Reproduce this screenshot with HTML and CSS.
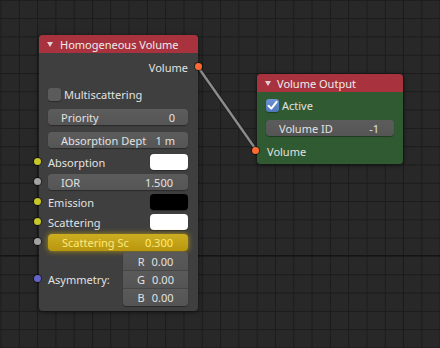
FILE: index.html
```html
<!DOCTYPE html>
<html lang="en">
<head>
	<meta charset="UTF-8">
	<title>Volume Nodes</title>
	<link rel="stylesheet" href="styles.css">
</head>
<body>
	<div class="editor">
		<svg class="link" width="440" height="348" viewBox="0 0 440 348">
			<line class="link--edge" x1="198" y1="67" x2="257" y2="151"/>
			<line class="link--line" x1="198" y1="67" x2="257" y2="151"/>
		</svg>

		<!-- Homogeneous Volume -->
		<div class="node node--volume">
			<div class="node--header">
				<span class="node--arrow"></span>
				<span class="node--title">Homogeneous Volume</span>
			</div>
			<div class="node--body">
				<div class="row row--output">
					<span>Volume</span>
					<span class="socket socket--out socket--shader"></span>
				</div>
				<div class="row row--check">
					<span class="check"></span>
					<span>Multiscattering</span>
				</div>
				<div class="field field--priority">
					<span>Priority</span>
					<span>0</span>
				</div>
				<div class="field field--dept">
					<span>Absorption Dept</span>
					<span>1 m</span>
				</div>
				<div class="row row--socket row--first">
					<span class="socket socket--in socket--color"></span>
					<span>Absorption</span>
					<span class="swatch swatch--white"></span>
				</div>
				<div class="row row--socket">
					<span class="socket socket--in socket--value"></span>
					<div class="field field--wide">
						<span>IOR</span>
						<span>1.500</span>
					</div>
				</div>
				<div class="row row--socket">
					<span class="socket socket--in socket--color"></span>
					<span>Emission</span>
					<span class="swatch swatch--black"></span>
				</div>
				<div class="row row--socket">
					<span class="socket socket--in socket--color"></span>
					<span>Scattering</span>
					<span class="swatch swatch--white"></span>
				</div>
				<div class="row row--socket">
					<span class="socket socket--in socket--value"></span>
					<div class="field field--wide field--active">
						<span>Scattering Sc</span>
						<span>0.300</span>
					</div>
				</div>
				<div class="row row--vector">
					<span class="socket socket--in socket--vector"></span>
					<span>Asymmetry:</span>
					<div class="vector">
						<div class="vector--item"><span>R</span><span>0.00</span></div>
						<div class="vector--item"><span>G</span><span>0.00</span></div>
						<div class="vector--item"><span>B</span><span>0.00</span></div>
					</div>
				</div>
			</div>
		</div>

		<!-- Volume Output -->
		<div class="node node--output">
			<div class="node--header">
				<span class="node--arrow"></span>
				<span class="node--title">Volume Output</span>
			</div>
			<div class="node--body">
				<div class="row row--check row--active">
					<span class="check check--on">
						<svg width="13" height="13" viewBox="0 0 13 13"><path d="M2.5 6.8 L5.3 9.6 L10.6 2.8" fill="none" stroke="#fff" stroke-width="2" stroke-linecap="round" stroke-linejoin="round"/></svg>
					</span>
					<span>Active</span>
				</div>
				<div class="field field--id">
					<span>Volume ID</span>
					<span>-1</span>
				</div>
				<div class="row row--input">
					<span class="socket socket--in socket--shader"></span>
					<span>Volume</span>
				</div>
			</div>
		</div>
	</div>
</body>
</html>
```

FILE: styles.css
```css
body {
	margin: 0;
	background: #282828;
	font-family: "Noto Sans", "Open Sans", sans-serif;
	font-size: 11px;
	color: #e2e2e2;
}

.editor {
	position: relative;
	width: 440px;
	height: 348px;
	overflow: hidden;
	background:
		linear-gradient(to bottom, transparent 255px, #141414 255px, #141414 256px, transparent 256px),
		linear-gradient(to right, #1b1b1b 1px, transparent 1px),
		linear-gradient(to bottom, #1b1b1b 1px, transparent 1px),
		#282828;
	background-size: 100% 100%, 18.3px 18.3px, 18.3px 18.3px;
	background-position: 0 0, 0.5px 0, 0 -0.2px;
}

.link {
	position: absolute;
	left: 0;
	top: 0;
}

.link--edge {
	stroke: #1e1e1e;
	stroke-width: 4;
}

.link--line {
	stroke: #8c8c8c;
	stroke-width: 2.4;
}

/* nodes */

.node {
	position: absolute;
	border-radius: 4px;
	background: #3f3f3f;
	box-shadow: 0 1px 5px rgba(0, 0, 0, 0.55);
}

.node--volume {
	left: 39px;
	top: 35px;
	width: 159px;
}

.node--output {
	left: 257px;
	top: 74px;
	width: 146px;
}

.node--header {
	display: flex;
	align-items: center;
	height: 18px;
	background: #a8323e;
	border-radius: 4px 4px 0 0;
	color: #ececec;
}

.node--arrow {
	width: 0;
	height: 0;
	margin: 1px 7px 0 8px;
	border-left: 3px solid transparent;
	border-right: 3px solid transparent;
	border-top: 5px solid #e2cfd1;
}

.node--output .node--arrow {
	margin-right: 6px;
}

.node--body {
	padding: 5px 10px 5px 9px;
}

.node--output .node--body {
	padding: 4px 9px;
	background: #305a31;
	border-radius: 0 0 4px 4px;
}

/* rows */

.row {
	position: relative;
	display: flex;
	align-items: center;
	justify-content: space-between;
}

.row--output {
	height: 18px;
	justify-content: flex-end;
}

.row--check {
	height: 18px;
	margin-top: 9px;
	justify-content: flex-start;
	gap: 3px;
}

.row--active {
	height: 19px;
	margin-top: 0;
}

.row--socket {
	height: 20px;
}

.row--first {
	margin-top: 4px;
}

.row--vector {
	height: 54px;
}

.row--input {
	height: 18px;
	margin-top: 6px;
	padding-left: 1px;
}

/* widgets */

.check {
	display: flex;
	width: 13px;
	height: 13px;
	border-radius: 3px;
	background: #5b5b5b;
	box-shadow: 0 1px 1px rgba(0, 0, 0, 0.3);
}

.check--on {
	background: linear-gradient(#6a92d4, #4f77b9);
}

.field {
	display: flex;
	align-items: center;
	justify-content: space-between;
	height: 16px;
	padding: 0 13px;
	border-radius: 4px;
	background: linear-gradient(#5c5c5c, #555555);
	box-shadow: 0 1px 1px rgba(0, 0, 0, 0.35);
}

.field--priority {
	margin-top: 6px;
}

.field--dept {
	margin-top: 7px;
}

.field--wide {
	flex: 1;
	padding-right: 15px;
}

.field--active {
	height: 17px;
	padding: 0 15px 0 14px;
	background: linear-gradient(#cdae22, #b8960e);
	box-shadow: 0 0 5px 1px rgba(214, 176, 10, 0.55);
	color: #ffe97a;
}

.field--id {
	margin-top: 5px;
	padding: 0 15px 0 13px;
}

.swatch {
	width: 38px;
	height: 16px;
	border-radius: 4px;
	box-shadow: 0 1px 1px rgba(0, 0, 0, 0.35);
}

.swatch--white {
	background: #ffffff;
}

.swatch--black {
	background: #000000;
}

.vector {
	display: flex;
	flex-direction: column;
	width: 65px;
	border-radius: 4px;
	overflow: hidden;
	box-shadow: 0 1px 1px rgba(0, 0, 0, 0.35);
}

.vector--item {
	display: flex;
	align-items: center;
	justify-content: center;
	gap: 7px;
	height: 18px;
	box-sizing: border-box;
	background: linear-gradient(#5a5a5a, #545454);
	border-top: 1px solid #464646;
}

.vector--item:first-child {
	border-top: none;
}

/* sockets */

.socket {
	position: absolute;
	top: 50%;
	width: 7px;
	height: 7px;
	margin-top: -4px;
	border-radius: 50%;
	box-shadow: 0 0 0 1px rgba(0, 0, 0, 0.45);
}

.socket--in {
	left: -14px;
}

.socket--out {
	right: -14px;
}

.socket--shader {
	background: #ff6a33;
}

.socket--color {
	background: #c8c72a;
}

.socket--value {
	background: #a2a2a2;
}

.socket--vector {
	background: #6363c8;
}
```
